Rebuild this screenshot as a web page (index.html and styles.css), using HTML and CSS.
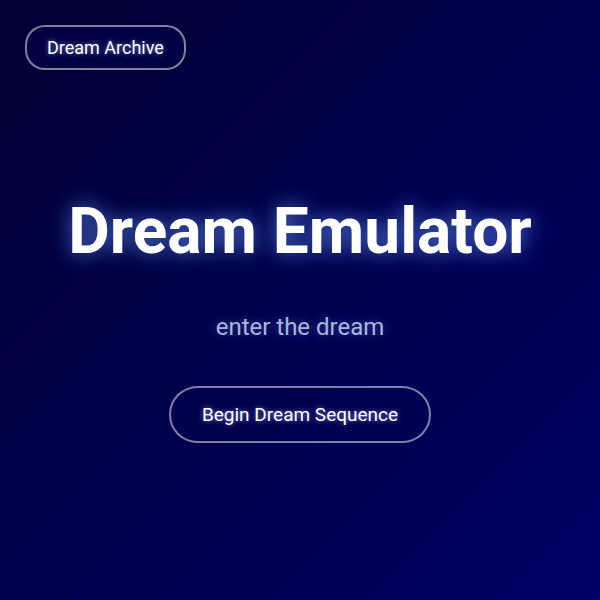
FILE: index.html
```html
<!DOCTYPE html>
<html lang="en">
    <head>
        <meta charset="utf-8" />
        <meta name="viewport" content="width=device-width, initial-scale=1" />
        <title>Dream Emulator</title>
        <link rel="stylesheet" href="styles.css">
    </head>
    <body>
        <div class="header">
            <button type="button" class="dream-button archive-button">Dream Archive</button>
        </div>
        <div class="main">
            <h1>Dream Emulator</h1>
            <p class="subtitle">enter the dream</p>
            <button type="button" class="dream-button begin-button">Begin Dream Sequence</button>
        </div>
    </body>
</html>
```

FILE: styles.css
```css
*{
    box-sizing: border-box;
}

body{
    margin: 0;
    min-height: 100vh;
    display: grid;
    background: linear-gradient(135deg, #000033, #000066);
    color: #fff;
    font-family: Roboto, sans-serif;
}

/* header and main share one cell so the title stays centered */
.header,
.main{
    grid-area: 1 / 1;
}

.header{
    padding: 25px;
    justify-self: start;
    align-self: start;
    z-index: 1;
}

.main{
    display: flex;
    flex-direction: column;
    align-items: center;
    justify-content: center;
    text-align: center;
    padding-top: 36px;
}

h1{
    margin: 0 0 42px;
    font-size: 64px;
    line-height: 76px;
    text-shadow: 0 0 20px rgba(100, 150, 255, 0.8);
}

.subtitle{
    margin: 0 0 44px;
    color: #adb5d9;
    font-size: 24px;
    line-height: 30px;
    text-shadow: 0 0 10px rgba(100, 150, 255, 0.5);
}

.dream-button{
    border: 2px solid rgba(255, 255, 255, 0.5);
    background: rgba(0, 0, 77, 0.5);
    color: #fff;
    font-family: inherit;
    text-shadow: 0 0 5px rgba(180, 180, 255, 0.7);
    cursor: pointer;
}

.dream-button:hover{
    background: rgba(255, 255, 255, 0.1);
}

.archive-button{
    padding: 10px 20px;
    border-radius: 20px;
    font-size: 18px;
    line-height: 21px;
}

.begin-button{
    padding: 15px 31px;
    border-radius: 30px;
    font-size: 19px;
    line-height: 23px;
}
```
